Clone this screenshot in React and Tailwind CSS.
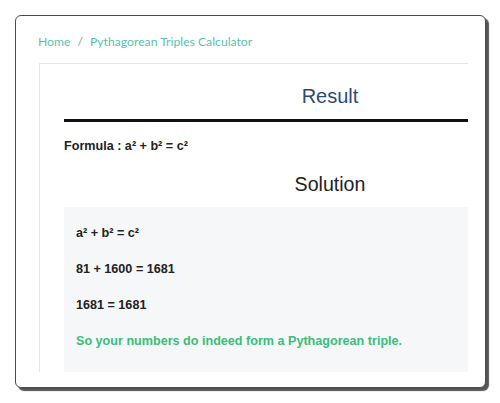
import React from 'react';

const lines = ['a² + b² = c²', '81 + 1600 = 1681', '1681 = 1681'];

const App = () => {
  return (
    <div className="w-[500px] h-[403px] bg-white p-[15px] pr-[14px]" style={{ fontFamily: 'Arial, "Liberation Sans", sans-serif' }}>
      <div className="h-[373px] rounded-md border border-[#4a4a4a] bg-white shadow-[3px_3px_1px_#555] pl-[23px] pr-[17px] pt-[17px] pb-[15px] flex flex-col">
        {/* breadcrumb */}
        <div className="flex items-center gap-[7px] pl-[-1px] -ml-[1px] text-[12.2px] leading-[18px] text-[#5bbfb0]" style={{ fontFamily: 'Lato, "Open Sans", sans-serif' }}>
          <span>Home</span>
          <span className="text-[#8a9a9a]">/</span>
          <span>Pythagorean Triples Calculator</span>
        </div>

        {/* result box */}
        <div className="mt-[12px] flex-1 border-l border-t border-[#e6e6e6] overflow-hidden pl-[24px]">
          <div className="w-[532px]">
            <div className="pt-[20px] pb-[11px] text-center text-[20px] leading-[24px] text-[#2b4b6f]">Result</div>
            <div className="h-[3px] bg-[#111]" />
            <div className="mt-[17px] text-[12.6px] leading-[14px] font-bold text-[#222]">Formula : a² + b² = c²</div>
            <div className="mt-[20px] text-center text-[19.6px] leading-[23px] text-[#222]">Solution</div>
            <div className="mt-[11px] bg-[#f6f7f9] pl-[12px] pt-[19px] pb-[24px] text-[12.6px] leading-[14px] font-bold">
              {lines.map((l) => (
                <div key={l} className="mb-[22px] text-[#222]">{l}</div>
              ))}
              <div className="text-[#3bbd7a]">So your numbers do indeed form a Pythagorean triple.</div>
            </div>
          </div>
        </div>
      </div>
    </div>
  );
};

export default App;
